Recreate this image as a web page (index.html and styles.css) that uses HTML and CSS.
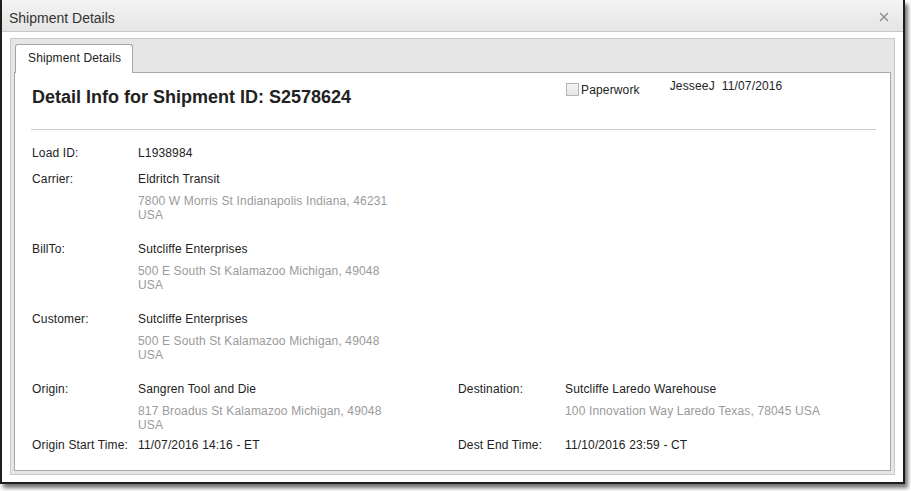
FILE: index.html
```html
<!DOCTYPE html>
<html>
<head>
<meta charset="utf-8">
<link rel="stylesheet" href="styles.css">
</head>
<body>
<div class="dialog">
  <div class="titlebar">
    <span class="title">Shipment Details</span>
    <svg class="close" width="10" height="10" viewBox="0 0 10 10"><path d="M1 1L9 9M9 1L1 9" stroke="#8a8a8a" stroke-width="1.4"/></svg>
  </div>
  <div class="dlg-body">
    <div class="tabs">
      <div class="tabbar"><div class="tab">Shipment Details</div></div>
      <div class="pane">
        <div class="header">
          <h1 class="heading">Detail Info for Shipment ID: S2578624</h1>
          <label class="paper"><span class="cbox"></span><span class="ptxt">Paperwork</span></label>
          <div class="stamp">JesseeJ&nbsp; 11/07/2016</div>
        </div>
        <div class="rule"></div>
        <div class="grid">
          <div class="lbl r-load">Load ID:</div>
          <div class="val wide r-load">L1938984</div>

          <div class="lbl">Carrier:</div>
          <div class="val wide blk">
            <div class="name">Eldritch Transit</div>
            <div class="addr">7800 W Morris St Indianapolis Indiana, 46231<br>USA</div>
          </div>

          <div class="lbl">BillTo:</div>
          <div class="val wide blk">
            <div class="name">Sutcliffe Enterprises</div>
            <div class="addr">500 E South St Kalamazoo Michigan, 49048<br>USA</div>
          </div>

          <div class="lbl">Customer:</div>
          <div class="val wide blk">
            <div class="name">Sutcliffe Enterprises</div>
            <div class="addr">500 E South St Kalamazoo Michigan, 49048<br>USA</div>
          </div>

          <div class="lbl">Origin:</div>
          <div class="val blk2">
            <div class="name">Sangren Tool and Die</div>
            <div class="addr">817 Broadus St Kalamazoo Michigan, 49048<br>USA</div>
          </div>
          <div class="lbl">Destination:</div>
          <div class="val blk2">
            <div class="name">Sutcliffe Laredo Warehouse</div>
            <div class="addr">100 Innovation Way Laredo Texas, 78045 USA</div>
          </div>

          <div class="lbl">Origin Start Time:</div>
          <div class="val">11/07/2016 14:16 - ET</div>
          <div class="lbl">Dest End Time:</div>
          <div class="val">11/10/2016 23:59 - CT</div>
        </div>
      </div>
    </div>
  </div>
</div>
</body>
</html>
```

FILE: styles.css
```css
html, body {
  margin: 0;
  padding: 0;
  background: #ffffff;
}
body {
  font-family: "Liberation Sans", Arial, sans-serif;
  font-size: 12px;
  letter-spacing: 0.15px;
  color: #222;
  width: 911px;
  height: 491px;
  overflow: hidden;
}
.dialog {
  box-sizing: border-box;
  width: 905px;
  height: 484px;
  background: #fff;
  border-left: 2px solid #1e1e1e;
  border-right: 2px solid #1e1e1e;
  border-bottom: 2px solid #1e1e1e;
  box-shadow: 3px 4px 4px rgba(0,0,0,0.55);
  display: flex;
  flex-direction: column;
}
.titlebar {
  height: 31px;
  flex: 0 0 31px;
  border-bottom: 1px solid #c8c8c8;
  background: linear-gradient(#f3f3f3, #e5e5e5);
  display: flex;
  align-items: center;
  padding-left: 7px;
  padding-right: 14px;
}
.title {
  font-size: 14px;
  letter-spacing: 0;
  color: #333;
  flex: 1;
  margin-top: 4px;
}
.close {
  display: block;
  margin-top: 3px;
}
.dlg-body {
  flex: 1;
  display: flex;
  flex-direction: column;
  padding: 6px 8px 7px 8px;
  min-height: 0;
}
.tabs {
  flex: 1;
  display: flex;
  flex-direction: column;
  border: 1px solid #c9c9c9;
  background: #e6e6e6;
  padding: 5px 3px 3px 3px;
}
.tabbar {
  display: flex;
  height: 28px;
}
.tab {
  position: relative;
  z-index: 1;
  margin-left: 1px;
  box-sizing: border-box;
  height: 29px;
  padding: 0 11px 0 12px;
  line-height: 27px;
  border: 1px solid #a5a5a5;
  border-bottom: none;
  border-radius: 3px 3px 0 0;
  background: #fff;
  color: #222;
}
.pane {
  flex: 1;
  border: 1px solid #a8a8a8;
  background: #fff;
  padding: 6px 14px 0 17px;
}
.header {
  display: flex;
  align-items: flex-start;
}
.heading {
  flex: 0 0 534px;
  margin: 7px 0 0 0;
  font-size: 18px;
  letter-spacing: 0;
  line-height: 22px;
  font-weight: bold;
  color: #222;
}
.paper {
  display: flex;
  align-items: center;
  margin-top: 2px;
  line-height: 14px;
  color: #222;
}
.cbox {
  display: inline-block;
  box-sizing: border-box;
  width: 13px;
  height: 13px;
  border: 1px solid #b5b5b5;
  background: linear-gradient(#f4f4f4, #e6e6e6);
  margin-right: 2px;
}
.ptxt {
  margin-top: 2px;
}
.stamp {
  margin-left: 30px;
  line-height: 14px;
  color: #222;
}
.rule {
  height: 1px;
  background: #cccccc;
  margin: 21px 0 16px -1px;
}
.grid {
  display: grid;
  grid-template-columns: 106px 320px 107px 1fr;
  line-height: 14px;
}
.wide {
  grid-column: 2 / 5;
}
.r-load {
  margin-bottom: 12px;
}
.blk {
  margin-bottom: 20px;
}
.blk2 {
  margin-bottom: 6px;
}
.name {
  margin-bottom: 8px;
}
.addr {
  color: #9a9a9a;
}
```
